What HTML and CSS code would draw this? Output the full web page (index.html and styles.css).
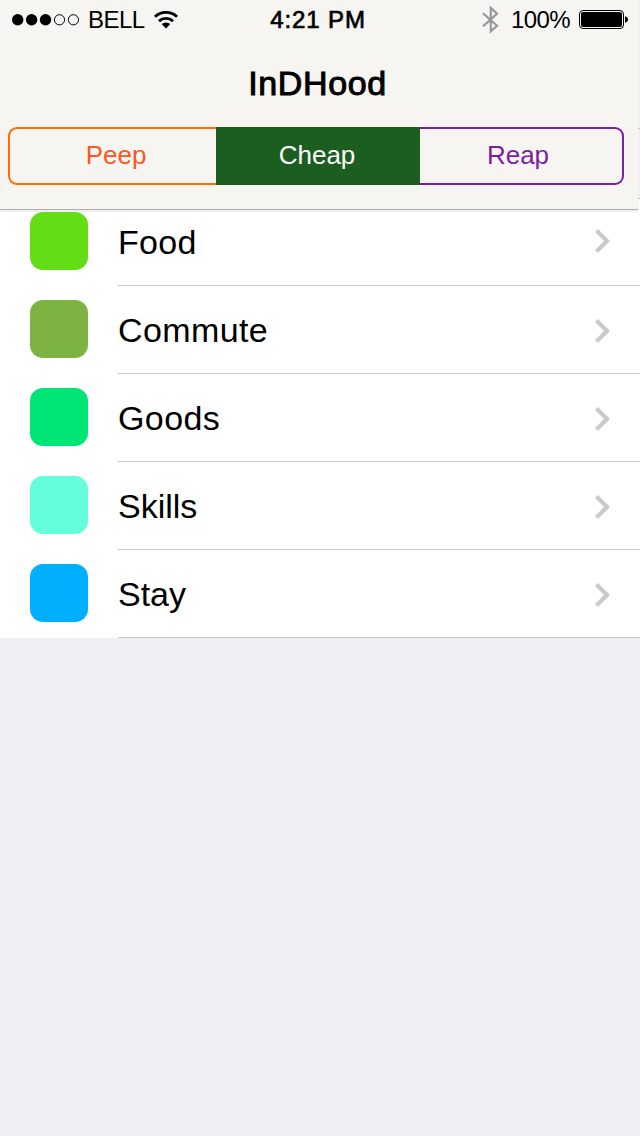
FILE: index.html
```html
<!DOCTYPE html>
<html lang="en">
<head>
<meta charset="utf-8">
<title>InDHood</title>
<link rel="stylesheet" href="styles.css">
</head>
<body>
<div class="top">
<header class="header">
  <div class="status">
    <div class="carrier">
      <svg class="signal" width="68" height="12" viewBox="0 0 68 12"><g><circle cx="5.7" cy="5.8" r="5.7"/><circle cx="19.6" cy="5.8" r="5.7"/><circle cx="33.5" cy="5.8" r="5.7"/></g><g fill="none" stroke="#000"><circle cx="47.5" cy="5.8" r="5.1"/><circle cx="61.4" cy="5.8" r="5.1"/></g></svg>
      <span class="bell">BELL</span>
      <svg class="wifi" width="24" height="19" viewBox="0 0 24 19"><g fill="none" stroke="#000" stroke-width="2.8"><path d="M1 5.7a16 16 0 0 1 22 0"/><path d="M5 10.1a10.3 10.3 0 0 1 14 0"/></g><path d="M7.7 13.1a6.4 6.4 0 0 1 8.6 0L12 17.6z"/></svg>
    </div>
    <div class="time">4:21 PM</div>
    <div class="power">
      <svg width="17" height="28" viewBox="0 0 17 28"><path d="M1 7.3l14 12.4-6.2 5.6V1.9l6.2 5.8L1 20.4" fill="none" stroke="#999" stroke-width="2.2"/></svg>
      <span class="percent">100%</span>
      <svg class="battery" width="50" height="20" viewBox="0 0 50 20"><rect x=".5" y=".5" width="44" height="18" rx="3.5" fill="none" stroke="#000"/><rect x="2" y="2" width="41" height="15" rx="2"/><path d="M46 6.2q3 .8 3 3.3t-3 3.3z"/></svg>
    </div>
  </div>
  <h1 class="title">InDHood</h1>
  <div class="segments">
    <div class="segment peep">Peep</div>
    <div class="segment cheap">Cheap</div>
    <div class="segment reap">Reap</div>
  </div>
</header>
<div class="edge"></div>
</div>
<ul class="list">
  <li class="row"><span class="swatch food"></span><span class="label">Food</span><svg class="chevron" width="16" height="26" viewBox="0 0 16 26"><path d="M1.5 2.5L12 13 1.5 23.5"/></svg></li>
  <li class="row"><span class="swatch commute"></span><span class="label wide">Commute</span><svg class="chevron" width="16" height="26" viewBox="0 0 16 26"><path d="M1.5 2.5L12 13 1.5 23.5"/></svg></li>
  <li class="row"><span class="swatch goods"></span><span class="label wide">Goods</span><svg class="chevron" width="16" height="26" viewBox="0 0 16 26"><path d="M1.5 2.5L12 13 1.5 23.5"/></svg></li>
  <li class="row"><span class="swatch skills"></span><span class="label narrow">Skills</span><svg class="chevron" width="16" height="26" viewBox="0 0 16 26"><path d="M1.5 2.5L12 13 1.5 23.5"/></svg></li>
  <li class="row"><span class="swatch stay"></span><span class="label narrow">Stay</span><svg class="chevron" width="16" height="26" viewBox="0 0 16 26"><path d="M1.5 2.5L12 13 1.5 23.5"/></svg></li>
</ul>
</body>
</html>
```
FILE: styles.css
```css
* { box-sizing: border-box; }
body {
  margin: 0;
  height: 1136px;
  background: #efeff4;
  color: #000;
  font-family: "Liberation Sans", Arial, sans-serif;
}
svg { display: block; flex: none; }
.top { display: flex; height: 210px; background: #fff; }
.header {
  width: 638px;
  height: 210px;
  background: #f6f5f1;
  border-bottom: 1px solid #b2b2b2;
  box-shadow: 0 1px 2px rgba(0, 0, 0, .12);
}
.edge {
  width: 2px;
  height: 199px;
  background: linear-gradient(#c8c7cc, #c8c7cc) 0 128px / 2px 1px no-repeat, #efeff4;
  border-bottom: 1px solid #c8c7cc;
}
.status {
  display: grid;
  grid-template-columns: 1fr auto 1fr;
  height: 40px;
  align-items: center;
  padding: 0 9px 0 12px;
  font-size: 24px;
  line-height: 40px;
}
.carrier, .power { display: flex; align-items: center; }
.bell { margin-left: 8px; letter-spacing: -.5px; }
.wifi { margin-left: 9px; }
.time { margin-left: -5px; letter-spacing: .9px; -webkit-text-stroke: .7px #000; }
.power { justify-content: flex-end; }
.percent { margin-left: 12px; letter-spacing: -.6px; }
.battery { margin-left: 9px; }
.title {
  margin: 23px 0 0;
  height: 40px;
  padding-right: 3px;
  line-height: 40px;
  font-size: 34px;
  font-weight: 400;
  letter-spacing: .6px;
  text-align: center;
  -webkit-text-stroke: 1px #000;
}
.segments {
  display: grid;
  grid-template-columns: 208px 204px 204px;
  height: 58px;
  margin: 24px 0 0 8px;
}
.segment {
  border: 2px solid;
  font-size: 26px;
  line-height: 52px;
  text-align: center;
}
.peep { border-color: #ff6d00; border-right: 0; border-radius: 9px 0 0 9px; color: #ff5722; padding-left: 6px; }
.cheap { background: #1b5e20; border-color: #1b5e20; color: #fff; padding-right: 2px; }
.reap { border-color: #7b1fa2; border-left: 0; border-radius: 0 9px 9px 0; color: #7b1fa2; padding-right: 6px; }
.list { list-style: none; margin: 0; padding: 0; }
.row {
  display: flex;
  height: 88px;
  align-items: center;
  padding-left: 30px;
  background: #fff linear-gradient(#c8c7cc, #c8c7cc) 118px 100% / 522px 1px no-repeat;
}
.swatch { width: 58px; height: 58px; margin-top: -2px; border-radius: 13px; }
.food { background: #64dd17; }
.commute { background: #7cb342; }
.goods { background: #00e676; }
.skills { background: #64ffda; }
.stay { background: #00b0ff; }
.label { flex: 1; margin-left: 30px; font-size: 34px; line-height: 44px; letter-spacing: .3px; }
.wide { letter-spacing: .4px; }
.narrow { letter-spacing: 0; }
.chevron { margin: 2px 29px 0 0; fill: none; stroke: #c9c9cb; stroke-width: 4.2; }
.row:first-child { height: 76px; }
.row:first-child .swatch { margin-top: -14px; }
.row:first-child .label { margin-top: -12px; }
.row:first-child .chevron { margin-top: -14px; }
```
